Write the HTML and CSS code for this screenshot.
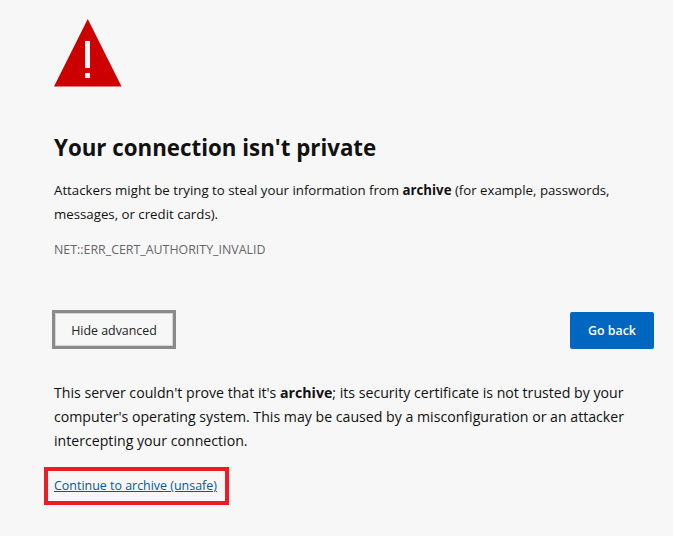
FILE: index.html
```html
<!DOCTYPE html>
<html lang="en">

<head>
    <meta charset="UTF-8">
    <title>Privacy error</title>
    <link rel="stylesheet" href="styles.css">
</head>

<body>
    <div class="page">
        <!-- warning icon -->
        <svg class="warn" width="68" height="68" viewBox="0 0 68 68">
            <path d="M33.75 0 L67.5 67.5 L0 67.5 Z" fill="#cc0000" />
            <rect x="31" y="22" width="5" height="27" fill="#f7f7f7" />
            <rect x="31" y="54" width="5" height="5" fill="#f7f7f7" />
        </svg>

        <h1>Your connection isn't private</h1>
        <p class="info">Attackers might be trying to steal your information from <b>archive</b> (for example, passwords, messages, or credit cards).</p>
        <p class="code">NET::ERR_CERT_AUTHORITY_INVALID</p>

        <!-- buttons -->
        <div class="btns">
            <button class="btn_hide">Hide advanced</button>
            <button class="btn_back">Go back</button>
        </div>

        <p class="detail">This server couldn't prove that it's <b>archive</b>; its security certificate is not trusted by your computer's operating system. This may be caused by a misconfiguration or an attacker intercepting your connection.</p>

        <div class="mark">
            <a href="#">Continue to archive (unsafe)</a>
        </div>
    </div>
</body>

</html>
```

FILE: styles.css
```css
* {
    padding: 0px;
    margin: 0px;
    box-sizing: border-box;
}

html, body {
    height: 100%;
    background-color: #f7f7f7;
}

body {
    font-family: "Open Sans", "Noto Sans", sans-serif;
    color: #111;
    overflow: hidden;
}

.page {
    padding: 19px 19px 0 54px;
}

.warn {
    display: block;
}

h1 {
    margin-top: 45px;
    font-size: 22.3px;
    line-height: 32px;
    font-weight: 700;
    color: #111;
}

.info {
    margin-top: 14px;
    font-size: 13.25px;
    line-height: 24px;
}

.code {
    margin-top: 16px;
    font-size: 12.4px;
    line-height: 16px;
    color: #666;
}

.btns {
    margin: 52px 0 0 -2px;
    display: flex;
    justify-content: space-between;
    align-items: flex-end;
}

.btns button {
    font-family: inherit;
    font-size: 12.4px;
}

.btn_hide {
    width: 124px;
    height: 39px;
    padding-top: 1px;
    background-color: #f7f7f7;
    color: #222;
    border: 3px solid #8a8a8a;
    box-shadow: inset 0 0 0 1px #d5d5d5;
}

.btn_back {
    width: 84px;
    height: 37px;
    background-color: #0067c0;
    color: #fff;
    font-weight: 600;
    border: none;
    border-radius: 2px;
}

.detail {
    margin-top: 32px;
    font-size: 14.15px;
    line-height: 24px;
}

.mark {
    display: inline-block;
    margin: 14px 0 0 -10px;
    padding: 5px 8px 6px 6px;
    border: 4px solid #ed1c24;
}

.mark a {
    display: block;
    font-size: 12.45px;
    line-height: 19px;
    color: #005a9e;
}
```
